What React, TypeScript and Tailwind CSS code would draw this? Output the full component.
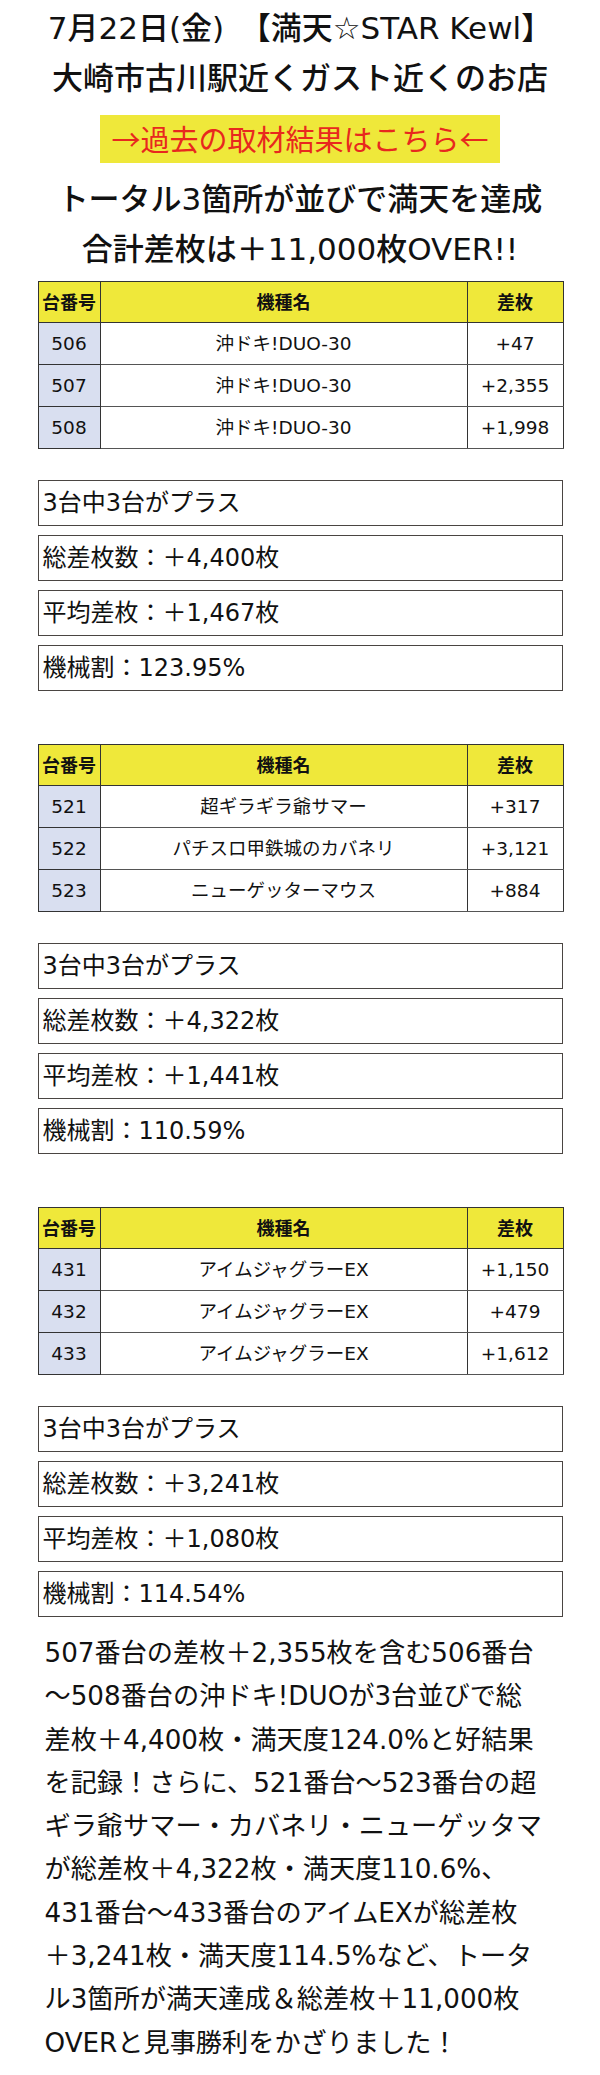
import React from "react"

type Row = { no: string; name: string; diff: string }

const sections: { rows: Row[]; stats: string[] }[] = [
    {
        rows: [
            { no: "506", name: "沖ドキ!DUO-30", diff: "+47" },
            { no: "507", name: "沖ドキ!DUO-30", diff: "+2,355" },
            { no: "508", name: "沖ドキ!DUO-30", diff: "+1,998" },
        ],
        stats: ["3台中3台がプラス", "総差枚数：＋4,400枚", "平均差枚：＋1,467枚", "機械割：123.95%"],
    },
    {
        rows: [
            { no: "521", name: "超ギラギラ爺サマー", diff: "+317" },
            { no: "522", name: "パチスロ甲鉄城のカバネリ", diff: "+3,121" },
            { no: "523", name: "ニューゲッターマウス", diff: "+884" },
        ],
        stats: ["3台中3台がプラス", "総差枚数：＋4,322枚", "平均差枚：＋1,441枚", "機械割：110.59%"],
    },
    {
        rows: [
            { no: "431", name: "アイムジャグラーEX", diff: "+1,150" },
            { no: "432", name: "アイムジャグラーEX", diff: "+479" },
            { no: "433", name: "アイムジャグラーEX", diff: "+1,612" },
        ],
        stats: ["3台中3台がプラス", "総差枚数：＋3,241枚", "平均差枚：＋1,080枚", "機械割：114.54%"],
    },
]

const lines = [
    "507番台の差枚＋2,355枚を含む506番台",
    "〜508番台の沖ドキ!DUOが3台並びで総",
    "差枚＋4,400枚・満天度124.0%と好結果",
    "を記録！さらに、521番台〜523番台の超",
    "ギラ爺サマー・カバネリ・ニューゲッタマ",
    "が総差枚＋4,322枚・満天度110.6%、",
    "431番台〜433番台のアイムEXが総差枚",
    "＋3,241枚・満天度114.5%など、トータ",
    "ル3箇所が満天達成＆総差枚＋11,000枚",
    "OVERと見事勝利をかざりました！",
]

function ResultTable({ rows }: { rows: Row[] }) {
    return (
        <table className="w-[525px] table-fixed border-collapse border border-[#333]">
            <colgroup>
                <col className="w-[62px]" />
                <col className="w-[367px]" />
                <col className="w-[96px]" />
            </colgroup>
            <thead>
                <tr className="h-[41px] bg-[#efe83a] text-[18px] font-bold">
                    <th className="border border-[#333] p-0 text-center">台番号</th>
                    <th className="border border-[#333] p-0 text-center">機種名</th>
                    <th className="border border-[#333] border-l-[#7a7470] p-0 text-center">差枚</th>
                </tr>
            </thead>
            <tbody className="text-[18.5px]">
                {rows.map((r) => (
                    <tr key={r.no} className="h-[42px]">
                        <td className="border border-[#333] bg-[#d9dff0] p-0 text-center">{r.no}</td>
                        <td className="border border-[#333] border-b-[#555] p-0 text-center">{r.name}</td>
                        <td className="border border-[#333] border-l-[#7a7470] border-b-[#555] p-0 text-center">
                            {r.diff}
                        </td>
                    </tr>
                ))}
            </tbody>
        </table>
    )
}

function Stats({ items }: { items: string[] }) {
    return (
        <div className="mt-[31px] flex flex-col gap-[9px]">
            {items.map((s) => (
                <div key={s} className="flex h-[46px] items-center border border-[#4a4542] pl-[4px] text-[24px]">
                    {s}
                </div>
            ))}
        </div>
    )
}

export default function App() {
    return (
        <div className="w-[600px] bg-white font-['DejaVu_Sans','Noto_Sans_CJK_JP',sans-serif] text-[#111]">
            <div className="mx-auto w-[525px] pb-[10px]">

                {/* heading */}
                <div className="pt-[3px] text-center text-[31px] font-medium leading-[50px] whitespace-nowrap">
                    <p>7月22日(金)　【満天☆STAR Kewl】</p>
                    <p>大崎市古川駅近くガスト近くのお店</p>
                </div>

                <div className="mt-[12px] flex justify-center">
                    <div className="flex h-[48px] w-[400px] items-center justify-center bg-[#efe83a] font-['Noto_Sans_CJK_JP',sans-serif] text-[29px] text-[#e8281e]">
                        →過去の取材結果はこちら←
                    </div>
                </div>

                <div className="mt-[11px] text-center text-[31px] font-medium leading-[50px] whitespace-nowrap">
                    <p>トータル3箇所が並びで満天を達成</p>
                    <p>合計差枚は＋11,000枚OVER!!</p>
                </div>

                {sections.map((s, i) => (
                    <div key={i} className={i === 0 ? "mt-[7px]" : "mt-[53px]"}>
                        <ResultTable rows={s.rows} />
                        <Stats items={s.stats} />
                    </div>
                ))}

                <div className="mt-[15px] pl-[7px] text-[26.2px] leading-[43.3px]">
                    {lines.map((l) => (
                        <p key={l} className="whitespace-nowrap">{l}</p>
                    ))}
                </div>
            </div>
        </div>
    )
}
